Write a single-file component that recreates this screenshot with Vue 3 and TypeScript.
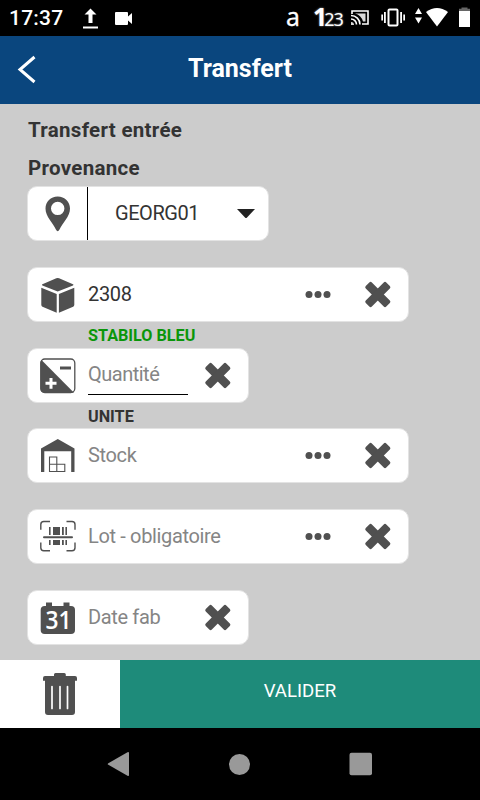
<script setup lang="ts">
type IconName = 'box' | 'quantity' | 'stock' | 'barcode' | 'calendar'

interface Field {
  icon: IconName
  value?: string
  placeholder?: string
  wide: boolean
  underlined?: boolean
  caption?: string
  captionTone?: 'green' | 'dark'
}

const fields: Field[] = [
  { icon: 'box', value: '2308', wide: true, caption: 'STABILO BLEU', captionTone: 'green' },
  { icon: 'quantity', placeholder: 'Quantité', wide: false, underlined: true, caption: 'UNITE', captionTone: 'dark' },
  { icon: 'stock', placeholder: 'Stock', wide: true },
  { icon: 'barcode', placeholder: 'Lot - obligatoire', wide: true },
  { icon: 'calendar', placeholder: 'Date fab', wide: false },
]
</script>

<template>
  <div class="screen">
    <div class="status">
      <span class="clock">17:37</span>
      <svg class="status-left" viewBox="0 0 56 36">
        <path d="M13.500 8.500l6 6h-4v8.500h-4v-8.500h-4zM6 26.500h15v2H6z" />
        <path d="M39 12h11q1 0 1 1v3.500l4-3.500v11l-4-3.500v3.500q0 1-1 1H39q-1 0-1-1V13q0-1 1-1z" />
      </svg>
      <span class="letter">a</span>
      <span class="digits"><b>1</b><span>23</span></span>
      <svg class="status-right" viewBox="0 0 130 36">
        <g fill="none" stroke="#fff" stroke-width="1.600">
          <path d="M2 14v-3h16v13h-6" />
          <path d="M1 15.500a9 9 0 0 1 9 9M1 19a5.500 5.500 0 0 1 5.500 5.500" />
        </g>
        <path d="M5 13.500h10.500v8H13Q11 15 5 13.500zM1 22a3 3 0 0 1 3 3H1z" opacity=".85" />
        <rect x="38.500" y="9.500" width="9" height="16" rx="1" fill="none" stroke="#fff" stroke-width="2" />
        <path d="M34 12h1.800v11H34zM31.300 14.500H33v6h-1.700zM50.200 12H52v11h-1.800zM53.300 14.500H55v6h-1.700z" />
        <path d="M68.500 8l3.500 6h-7zM68.500 23.500l3.500-6h-7z" />
        <path d="M76 12Q87 4 98 12L87 26.500z" />
        <path d="M111.500 7.500h6v1.200h2.500V11h-11V8.700h2.500z" fill="#666" />
        <path d="M109 11h11v16h-11z" />
      </svg>
    </div>

    <header class="header">
      <svg class="back" viewBox="0 0 20 30"><path d="M17.500 3L3 15.500L17.500 28" /></svg>
      <h1>Transfert</h1>
    </header>

    <main class="content">
      <h2>Transfert entrée</h2>
      <h3>Provenance</h3>

      <div class="field select">
        <svg class="icon" viewBox="0 0 40 40">
          <path fill-rule="evenodd" d="M19.700 2.500c7 0 12.300 5.300 12.300 12 0 8-7.500 14.500-10.500 21q-1.800 3.500-3.600 0C15 29 7.500 22.500 7.500 14.500c0-6.700 5.200-12 12.200-12zm0 5.200a6.700 6.700 0 1 0 0 13.400 6.700 6.700 0 0 0 0-13.400z" />
        </svg>
        <span class="separator"></span>
        <span class="selected">GEORG01</span>
        <svg class="caret" viewBox="0 0 20 12"><path d="M1 1h18l-8 8.500q-1 1-2 0z" /></svg>
      </div>
      <div class="caption"></div>

      <template v-for="field in fields" :key="field.icon">
        <div class="field" :class="{ wide: field.wide }">
          <svg class="icon" viewBox="0 0 40 40">
            <g v-if="field.icon === 'box'">
              <path d="M18.300 3.300q1.400-.6 2.800 0L35 9.200q1 .6 0 1.200l-15.300 6.200L4.400 10.400q-1-.6 0-1.200zM3.300 12.800l15.400 6.300v18.600L4.500 31.800q-1.200-.6-1.200-2zM36.300 12.800l-15.400 6.300v18.600l14.200-5.900q1.200-.6 1.200-2z" />
            </g>
            <g v-else-if="field.icon === 'quantity'">
              <rect x="2.800" y="3" width="34" height="33.500" rx="4" fill="#fff" stroke="#505050" stroke-width="1.300" />
              <path d="M3.500 4L36 36.700H6.500q-4 0-4-4V6z" />
              <path d="M22 10.500h11v3H22z" />
              <path d="M11.500 22h3v3.800h4v3h-4v4h-3v-4h-4v-3h4z" fill="#fff" />
            </g>
            <g v-else-if="field.icon === 'stock'">
              <path d="M19.800 3L36.500 12.500V36h-3.300V15.300H6.300V36H3V12.500z" />
              <path d="M11.500 21h7.300v14.500h-7.300zM11.500 28.300h15.300v7.200H11.500M18.800 28.300v7.200" fill="none" stroke="#505050" stroke-width="1.100" />
            </g>
            <g v-else-if="field.icon === 'barcode'">
              <path d="M2.800 12.800V7.500q0-3 3-3H12M28.500 4.500H34q3 0 3 3v5.300M37 25.500v5.300q0 3-3 3h-5.500M12 33.800H5.800q-3 0-3-3v-5.300" fill="none" stroke="#505050" stroke-width="1.400" />
              <path d="M11 10h1.600v8H11zM15 10h7v8h-7zM24 10h1.800v8H24zM27.400 10H29v8h-1.600zM11 23h1.600v5H11zM15 23h7v5h-7zM24 23h1.800v5H24zM27.400 23H29v5h-1.600z" />
              <path d="M6 20.300h28" stroke="#505050" stroke-width="2" stroke-linecap="round" />
            </g>
            <g v-else>
              <rect x="2.700" y="8" width="34.300" height="28" rx="4" />
              <path d="M8 4.500h6V10H8zM25.500 4.500h6V10h-6z" />
              <text x="7.500" y="30.600" textLength="26" lengthAdjust="spacingAndGlyphs">31</text>
            </g>
          </svg>
          <span class="input" :class="{ underlined: field.underlined, filled: field.value }">
            {{ field.value ?? field.placeholder }}
          </span>
          <svg v-if="field.wide" class="dots" viewBox="0 0 26 8">
            <circle cx="4" cy="3.500" r="3.500" /><circle cx="13" cy="3.500" r="3.500" /><circle cx="22" cy="3.500" r="3.500" />
          </svg>
          <svg class="clear" viewBox="0 0 28 28">
            <g transform="translate(13.800 13.500)">
              <rect x="-14.500" y="-4.300" width="29" height="8.600" rx="1.800" transform="rotate(45)" />
              <rect x="-14.500" y="-4.300" width="29" height="8.600" rx="1.800" transform="rotate(-45)" />
            </g>
          </svg>
        </div>
        <div class="caption" :class="field.captionTone">{{ field.caption }}</div>
      </template>
    </main>

    <footer class="actions">
      <button class="trash" type="button" aria-label="Supprimer">
        <svg viewBox="0 0 36 44">
          <path d="M12 4V2.500Q12 1 13.500 1h8.800q1.500 0 1.500 1.500V4H33q2 0 2 2v2.700h-2V40q0 3-3 3H6q-3 0-3-3V8.700H1V6q0-2 2-2z" />
          <path d="M10 14.500v22M18 14.500v22M25.500 14.500v22" stroke="#fff" stroke-width="1.700" stroke-linecap="round" />
        </svg>
      </button>
      <button class="validate" type="button">VALIDER</button>
    </footer>

    <nav class="nav">
      <svg viewBox="0 0 24 26"><path d="M1.300 12.200L20.500 1.300q1.500-.8 1.500.8v21.800q0 1.600-1.500.8L1.300 13.800q-1.200-.8 0-1.600z" /></svg>
      <svg viewBox="0 0 24 26"><circle cx="11.500" cy="13.500" r="10.500" /></svg>
      <svg viewBox="0 0 24 26"><rect x=".500" y="1.700" width="22.500" height="22.500" rx="2" /></svg>
    </nav>
  </div>
</template>

<style>
body {
  margin: 0;
  background: #000;
}
</style>

<style scoped>
.screen {
  width: 480px;
  height: 800px;
  display: flex;
  flex-direction: column;
  overflow: hidden;
  font-family: Roboto, "Liberation Sans", sans-serif;
  color: #333;
}
svg {
  display: block;
  flex: none;
}
.status {
  height: 36px;
  display: flex;
  align-items: center;
  background: #000;
  color: #fff;
  fill: #fff;
}
.clock {
  width: 68px;
  padding-left: 9px;
  font-size: 21px;
  font-weight: 500;
  line-height: 37px;
  letter-spacing: 0.200px;
}
.status-left {
  width: 56px;
  height: 36px;
}
.letter {
  width: 28px;
  margin: -4px 0 0 153px;
  font: 25px/30px "Open Sans", sans-serif;
  -webkit-text-stroke: 0.4px #fff;
}
.digits {
  width: 37px;
  margin: -2px 0 0 -1px;
  display: flex;
  align-items: baseline;
  font: 18px/32px "Open Sans", sans-serif;
  letter-spacing: -1px;
  text-shadow: 0 0 2px #aaa;
}
.digits b {
  font-size: 25px;
  letter-spacing: -4px;
  margin-right: 1px;
}
.status-right {
  width: 130px;
  height: 36px;
}
.header {
  height: 68px;
  display: grid;
  grid-template-columns: 36px 1fr 36px;
  align-items: center;
  background: #0a467e;
  color: #fff;
}
.back {
  width: 20px;
  height: 30px;
  margin: 0 0 3px 17px;
  fill: none;
  stroke: #fff;
  stroke-width: 3;
}
h1 {
  margin: 0 0 3px;
  text-align: center;
  font-size: 25px;
  line-height: 30px;
}
.content {
  height: 556px;
  padding-left: 27px;
  background: #ccc;
}
h2,
h3 {
  margin: 0 0 0 1px;
  font-size: 20.500px;
  letter-spacing: 0.300px;
  line-height: 38px;
}
h2 {
  padding-top: 7px;
}
h3 {
  height: 37px;
}
.field {
  width: 222px;
  height: 55px;
  box-sizing: border-box;
  display: flex;
  align-items: center;
  padding-left: 10px;
  border: 1px solid #e3e3e3;
  border-radius: 10px;
  background: #fff;
}
.field.select {
  width: 242px;
}
.field.wide {
  width: 382px;
}
.icon {
  width: 40px;
  height: 40px;
  fill: #505050;
}
.icon text {
  fill: #fff;
  font: 600 24.500px "Open Sans", sans-serif;
}
.separator {
  width: 1px;
  height: 53px;
  margin-left: 9px;
  background: #000;
}
.selected {
  width: 121px;
  padding-left: 27px;
  box-sizing: border-box;
  font-size: 20px;
  letter-spacing: -0.450px;
  line-height: 40px;
  padding-bottom: 1px;
}
.caret {
  width: 20px;
  height: 12px;
  margin-left: 27px;
  fill: #222;
}
.input {
  width: 100px;
  height: 41px;
  box-sizing: border-box;
  margin: 0 14px 0 10px;
  font-size: 20px;
  letter-spacing: -0.350px;
  line-height: 41px;
  color: #858585;
  white-space: nowrap;
}
.wide .input {
  width: 200px;
}
.filled {
  color: #333;
}
.underlined {
  height: 39px;
  line-height: 37px;
  border-bottom: 1px solid #000;
  letter-spacing: -0.500px;
}
.dots {
  width: 26px;
  height: 8px;
  margin-left: 3px;
  fill: #505050;
}
.clear {
  width: 28px;
  height: 28px;
  margin-left: 2px;
  fill: #505050;
}
.wide .clear {
  margin-left: 33px;
}
.caption {
  height: 26px;
  padding-left: 61px;
  font-size: 16.200px;
  font-weight: 700;
  line-height: 28px;
}
.green {
  color: #0a960a;
}
.dark {
  height: 25px;
}
.actions {
  height: 68px;
  display: flex;
}
button {
  border: 0;
  padding: 0;
  font: inherit;
}
.trash {
  width: 120px;
  display: flex;
  align-items: center;
  justify-content: center;
  background: #fff;
}
.trash svg {
  width: 36px;
  height: 44px;
  fill: #505050;
}
.validate {
  flex: 1;
  padding-bottom: 7px;
  background: #1e8b7a;
  color: #fff;
  font-size: 18.600px;
}
.nav {
  height: 72px;
  display: flex;
  justify-content: center;
  align-items: center;
  gap: 97px;
  background: #000;
  fill: #999;
}
.nav svg {
  width: 24px;
  height: 26px;
}
</style>
